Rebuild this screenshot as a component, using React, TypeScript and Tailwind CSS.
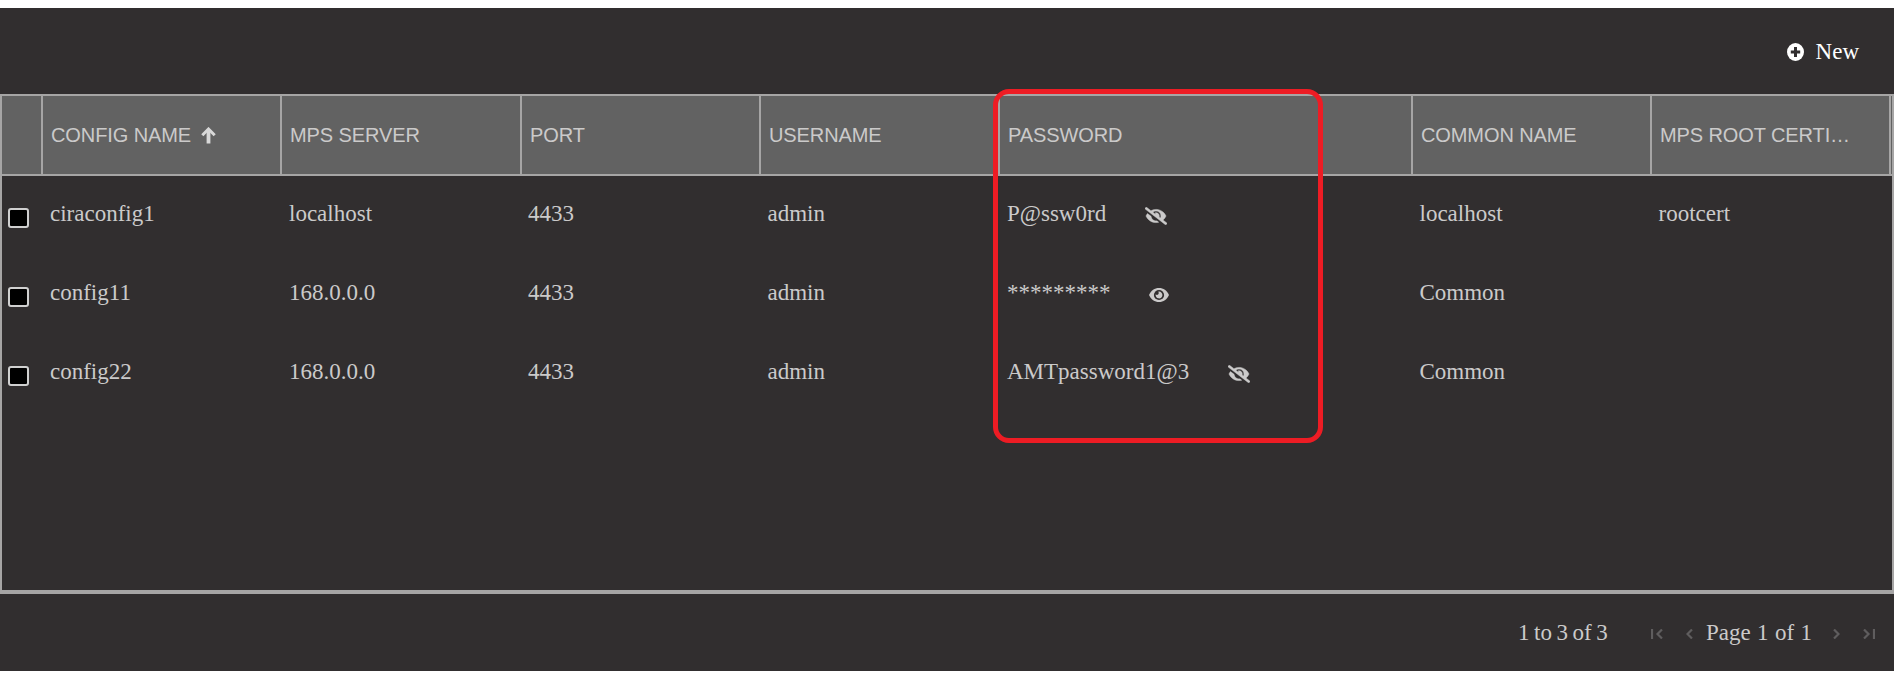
import React from "react";

const serif = "font-['Liberation_Serif',serif]";

const columns = [
  { title: "CONFIG NAME", width: "w-[239px]", sorted: true },
  { title: "MPS SERVER", width: "w-[240px]" },
  { title: "PORT", width: "w-[239px]" },
  { title: "USERNAME", width: "w-[239px]" },
  { title: "PASSWORD", width: "w-[413px]" },
  { title: "COMMON NAME", width: "w-[239px]" },
  { title: "MPS ROOT CERTI…", width: "w-[239px]" },
];

const rows = [
  { name: "ciraconfig1", server: "localhost", port: "4433", user: "admin", password: "P@ssw0rd", shown: true, gap: "ml-[39px]", common: "localhost", cert: "rootcert" },
  { name: "config11", server: "168.0.0.0", port: "4433", user: "admin", password: "*********", shown: false, gap: "ml-[38px]", common: "Common", cert: "" },
  { name: "config22", server: "168.0.0.0", port: "4433", user: "admin", password: "AMTpassword1@3", shown: true, gap: "ml-[39px]", common: "Common", cert: "" },
];

function Eye() {
  return (
    <svg width="20" height="14" viewBox="0 0 20 14" fill="none">
      <path d="M10 0C5.6 0 2 2.6 0 7c2 4.400 5.600 7 10 7s8-2.600 10-7c-2-4.400-5.600-7-10-7z" fill="#cbcaca" />
      <circle cx="10" cy="7" r="5.1" fill="#312e2f" />
      <path d="M10 3.600a3.400 3.400 0 1 1-3.300 2.700A1.700 1.700 0 0 0 9.200 3.700z" fill="#cbcaca" />
    </svg>
  );
}

function EyeOff() {
  return (
    <svg width="22" height="18" viewBox="0 0 640 512" fill="#cbcaca" stroke="#cbcaca" strokeWidth="14">
      <path d="M320 400c-75.850 0-137.250-58.710-142.900-133.110L72.200 185.820c-13.790 17.300-26.480 35.590-36.720 55.590a32.350 32.350 0 0 0 0 29.190C89.710 376.410 197.070 448 320 448c26.910 0 52.870-4 77.890-10.460L346 397.390a144.130 144.130 0 0 1-26 2.610zm313.820 58.100l-110.550-85.440a331.250 331.250 0 0 0 81.250-102.070 32.350 32.350 0 0 0 0-29.190C550.290 135.590 442.930 64 320 64a308.150 308.150 0 0 0-147.320 37.700L45.460 3.370A16 16 0 0 0 23 6.180L3.370 31.450A16 16 0 0 0 6.180 53.900l588.360 454.730a16 16 0 0 0 22.460-2.810l19.640-25.270a16 16 0 0 0-2.820-22.450zm-183.720-142l-39.300-30.380A94.750 94.750 0 0 0 416 256a94.760 94.760 0 0 0-121.310-92.210A47.650 47.650 0 0 1 304 192a46.640 46.640 0 0 1-1.540 10l-73.610-56.890A142.310 142.310 0 0 1 320 112a143.920 143.920 0 0 1 144 144c0 21.630-5.290 41.790-13.900 60.110z" />
    </svg>
  );
}

export default function App() {
  return (
    <div className="h-[689px] w-full overflow-hidden bg-white pt-2">
      <div className={`relative flex h-[663px] w-[1894px] flex-col bg-[#312e2f] text-[23px] text-[#cbcaca] ${serif}`}>
        <div className="flex h-[86px] shrink-0 items-center justify-end pr-[35px] pt-px text-white">
          <svg width="17" height="18" viewBox="0 0 17 18" className="mr-[12px]">
            <ellipse cx="8.500" cy="9" rx="8.500" ry="9" fill="#fff" />
            <path d="M8.500 4v10M3.800 9h9.400" stroke="#312e2f" strokeWidth="3" />
          </svg>
          <span className="pt-px">New</span>
        </div>

        <div className="flex h-[500px] shrink-0 flex-col border-2 border-b-4 border-[#a6a5a5]">
          <div className="flex h-[80px] shrink-0 border-b-2 border-[#a6a5a5] bg-[#626262] font-['Liberation_Sans',sans-serif] text-[20px] tracking-[-0.1px]">
            <div className="w-[41px] shrink-0 border-r-2 border-[#a6a5a5]" />
            {columns.map((c) => (
              <div key={c.title} className={`flex shrink-0 items-center whitespace-nowrap border-r-2 border-[#a6a5a5] px-2 ${c.width}`}>
                <span>{c.title}</span>
                {c.sorted && (
                  <svg width="15" height="17" viewBox="0 0 15 17" className="ml-[10px] shrink-0" fill="none" stroke="#d8d8d8">
                    <path d="M7.500 16.500V2.500" strokeWidth="3.800" />
                    <path d="M1.300 8.200L7.500 2l6.200 6.200" strokeWidth="3" />
                  </svg>
                )}
              </div>
            ))}
          </div>
          {rows.map((r) => (
            <div key={r.name} className="flex h-[79px] shrink-0 pb-0.5">
              <div className="flex w-[41px] shrink-0 items-center pl-[6px] pt-[7px]">
                <div className="h-5 w-[21px] rounded-[3px] border-2 border-[#d0d0d0] bg-black" />
              </div>
              <div className="flex w-[239px] items-center pl-[7px]">{r.name}</div>
              <div className="flex w-[240px] items-center pl-[7px]">{r.server}</div>
              <div className="flex w-[239px] items-center pl-[6px]">{r.port}</div>
              <div className="flex w-[239px] items-center pl-[6.500px]">{r.user}</div>
              <div className="flex w-[413px] items-center pl-[7px]">
                <span>{r.password}</span>
                <span className={`mt-[2px] ${r.gap}`}>{r.shown ? <EyeOff /> : <Eye />}</span>
              </div>
              <div className="flex w-[239px] items-center pl-[6.500px]">{r.common}</div>
              <div className="flex w-[239px] items-center pl-[6.500px]">{r.cert}</div>
            </div>
          ))}
        </div>

        <div className="flex h-[77px] shrink-0 items-center pt-[2px]">
          <span className="ml-[1518px] w-[133px] shrink-0 [word-spacing:-1.2px]">1 to 3 of 3</span>
          <svg width="12" height="10" viewBox="0 0 12 10" className="shrink-0" fill="none" stroke="#5f5d5e" strokeWidth="2.200">
            <path d="M1 0v10M11 .5L6.500 5l4.500 4.500" />
          </svg>
          <svg width="7" height="10" viewBox="0 0 7 10" className="ml-[23px] shrink-0" fill="none" stroke="#5f5d5e" strokeWidth="2.200">
            <path d="M6 .5L1.500 5 6 9.500" />
          </svg>
          <span className="ml-[13px] w-[127px] shrink-0 [word-spacing:0.6px]">Page 1 of 1</span>
          <svg width="7" height="10" viewBox="0 0 7 10" className="shrink-0" fill="none" stroke="#5f5d5e" strokeWidth="2.200">
            <path d="M1 .5L5.500 5 1 9.500" />
          </svg>
          <svg width="12" height="10" viewBox="0 0 12 10" className="ml-[23px] shrink-0" fill="none" stroke="#5f5d5e" strokeWidth="2.200">
            <path d="M1 .5L5.500 5 1 9.500M11 0v10" />
          </svg>
        </div>

        <div className="absolute left-[993px] top-[81px] h-[354px] w-[330px] rounded-[16px] border-[5px] border-[#ed1c24]" />
      </div>
    </div>
  );
}
